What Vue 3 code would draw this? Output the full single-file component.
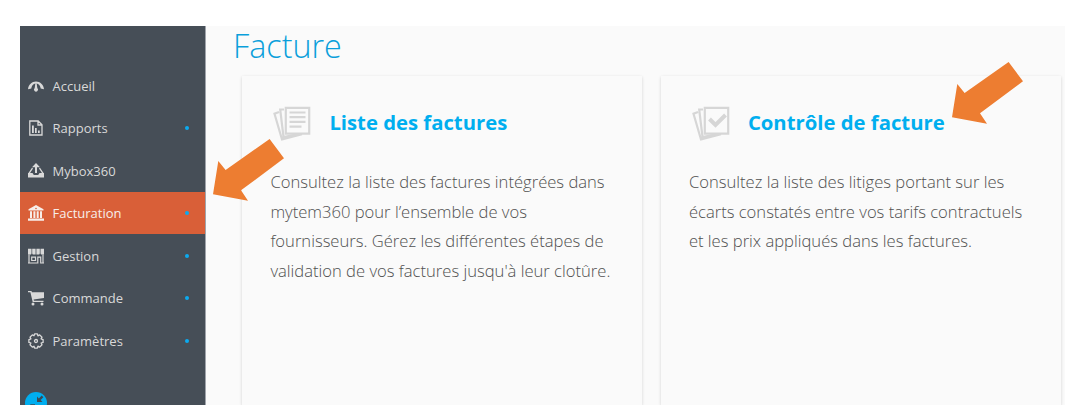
<template>
  <div class="app">
    <aside class="sidebar">
      <nav class="menu">
        <a
          v-for="item in menu"
          :key="item.id"
          class="menu-item"
          :class="{ active: item.id === current }"
          @click="current = item.id"
        >
          <svg class="menu-icon" viewBox="0 0 16 16">
            <g v-if="item.id === 'accueil'">
              <path d="M0 11.2C.5 6.5 3.8 3.400 8 3.400s7.500 3.100 8 7.800l-3.300-.6c-.3-2.500-1.200-4-2.700-4.700L8.700 5.500H7.300L6 5.900C4.500 6.600 3.600 8.100 3.300 10.600z" />
              <path d="M7.500 4.500h1l.8 5.600a2 2 0 1 1-2.600 0z" />
            </g>
            <g v-else-if="item.id === 'rapports'">
              <path class="line" d="M2.700 1h7.500L14 4.800V15H1.800V1zM10 1v4h4" />
              <path d="M4 5.500h1.800V13H4zM7 8h1.700v5H7zM10 10.500h1.700V13H10z" />
            </g>
            <g v-else-if="item.id === 'mybox'">
              <path d="M8 0l4 4.200H9V10H7V4.200H4z" />
              <path d="M0 10h4.500l1.300 2h4.400l1.300-2H16v4.500H0z" />
              <path class="line" d="M4.500 5.200L1 10.300M11.500 5.200L15 10.300" />
            </g>
            <g v-else-if="item.id === 'facturation'">
              <path d="M8 0l7.500 4.200v1.300H.5V4.200z" />
              <path d="M2 6.200h2V13H2zM5.400 6.200h2V13h-2zM8.700 6.200h2V13h-2zM12 6.200h2V13h-2zM0 13.600h16v2.200H0z" />
              <circle class="cut" cx="8" cy="3.5" r=".8" />
            </g>
            <g v-else-if="item.id === 'gestion'">
              <path d="M0 .8h3.500v4.700L3 6.500H0zM4.200.8h3.400v5.700H4.800l-.6-1zM8.400.8h3.400v4.700l-.6 1H8.400zM12.500.8H16v5.700h-3l-.5-1z" />
              <path class="thin" d="M1 6.500v9M15 6.500v9M3.700 9.200h3.800v3.300H3.700zM9.800 15.500V9.200h2.900v6.300M0 15h9.800M12.700 15H16" />
            </g>
            <g v-else-if="item.id === 'commande'">
              <path d="M0 1h3.500l.4 1.300H16V8L5.600 9.500l.4 1.300h9.500V12H4.700L2.400 2.300H0z" />
              <circle cx="5" cy="14" r="1.5" />
              <circle cx="14" cy="14" r="1.5" />
            </g>
            <g v-else>
              <path class="gear" d="M6.600.9h2.800l.5 1.900 1.800-.9 2.300 2.300-.9 1.700 2 .7v2.800l-2 .6.9 1.800-2.300 2.300-1.800-.9-.5 1.900H6.600L6 13.200l-1.700.9L2 11.800l.9-1.800-2-.6V6.600l2-.7L2 4.200l2.300-2.300 1.700.9z" />
              <circle class="gear" cx="8" cy="8" r="1.5" />
            </g>
          </svg>
          <span class="menu-label">{{ item.label }}</span>
          <span v-if="item.children" class="menu-dot"></span>
        </a>
      </nav>
      <button class="collapse">
        <svg viewBox="0 0 22 22">
          <path d="M12 4.500l1.900 1.900 2.800-2.800 1.700 1.700-2.800 2.800 1.900 1.900H12z" />
          <path d="M4.900 12.200H10v5.100l-1.700-1.700-2.800 2.800-1.700-1.700 2.800-2.800z" />
        </svg>
      </button>
    </aside>

    <main class="content">
      <h1 class="title">Facture</h1>
      <div class="cards">
        <section v-for="card in cards" :key="card.id" class="card">
          <header class="card-head">
            <svg class="card-icon" viewBox="0 0 38 36">
              <path d="M6 6L1.500 7.700 9 33.500l20-5.300M11 3.500H7.200L10.500 31l15-3" />
              <path d="M12.800 1.800h23.400v25.800H12.800z" />
              <path v-if="card.id === 'liste'" d="M16.500 6.500h16M16.500 11.200h16M16.500 15.900h16M16.500 20.600h12" />
              <path v-else class="check" d="M17.500 13l6 6L33.500 9" />
            </svg>
            <h2 class="card-title">{{ card.title }}</h2>
          </header>
          <p class="card-text">{{ card.text }}</p>
          <svg class="arrow" :class="card.id" viewBox="0 0 71 62">
            <path d="M0 55.300L5.300 22l7.300 9L56.600 0 71 19.300 28 51.300l7 10.400z" />
          </svg>
        </section>
      </div>
    </main>
  </div>
</template>

<script setup>
import { ref } from 'vue'

const current = ref('facturation')

const menu = [
  { id: 'accueil', label: 'Accueil' },
  { id: 'rapports', label: 'Rapports', children: true },
  { id: 'mybox', label: 'Mybox360' },
  { id: 'facturation', label: 'Facturation', children: true },
  { id: 'gestion', label: 'Gestion', children: true },
  { id: 'commande', label: 'Commande', children: true },
  { id: 'parametres', label: 'Paramètres', children: true },
]

const cards = [
  {
    id: 'liste',
    title: 'Liste des factures',
    text: "Consultez la liste des factures intégrées dans mytem360 pour l’ensemble de vos fournisseurs. Gérez les différentes étapes de validation de vos factures jusqu'à leur clotûre.",
  },
  {
    id: 'controle',
    title: 'Contrôle de facture',
    text: 'Consultez la liste des litiges portant sur les écarts constatés entre vos tarifs contractuels et les prix appliqués dans les factures.',
  },
]
</script>

<style>
body {
  background: #fff;
}
</style>

<style scoped>
.app {
  display: flex;
  box-sizing: border-box;
  width: 1045px;
  height: 379px;
  margin: 26px 0 0 20px;
  background: #fafafa;
  font-family: 'Open Sans', sans-serif;
}

.sidebar {
  flex: none;
  box-sizing: border-box;
  width: 186px;
  padding-top: 38.3px;
  overflow: hidden;
  background: #464e57;
  border-right: 1px solid #a0a4ab;
}

.menu-item {
  display: flex;
  align-items: center;
  height: 42.5px;
  padding: 0 16px 0 8px;
  color: #d9d9d9;
  font-size: 13px;
  cursor: pointer;
}

.menu-item.active {
  background: #d95f38;
  color: #f7eeea;
}

.menu-icon {
  width: 16px;
  height: 16px;
  margin-right: 8.5px;
  fill: currentColor;
}

.line,
.thin,
.gear {
  fill: none;
  stroke: currentColor;
  stroke-width: 1.3;
}

.thin {
  stroke-width: 1.2;
}

.gear {
  stroke-linejoin: round;
}

.cut {
  fill: #d95f38;
}

.menu-label {
  flex: 1;
}

.menu-dot {
  width: 4px;
  height: 4px;
  border-radius: 50%;
  background: #0baaf0;
}

.collapse {
  display: block;
  width: 22px;
  height: 22px;
  margin: 30px 0 0 5px;
  padding: 0;
  border: 0;
  border-radius: 50%;
  background: #00aeef;
}

.collapse svg {
  display: block;
  fill: #3c4a55;
}

.content {
  flex: 1;
  padding-left: 27px;
}

.title {
  margin: 0;
  height: 50px;
  color: #0a9fdb;
  font-size: 32.3px;
  font-weight: 300;
  line-height: 39px;
}

/* cuts the shadows at the bottom edge and leaves room for the pointers */
.cards {
  display: flex;
  gap: 18.5px;
  margin-left: 9.4px;
  clip-path: inset(-40px -40px 0 -40px);
}

.card {
  position: relative;
  flex: none;
  box-sizing: border-box;
  width: 400px;
  height: 329px;
  padding: 30px 28px 0 28px;
  box-shadow: 0 1px 3px rgba(0, 0, 0, 0.16);
}

.card-head {
  display: flex;
  align-items: flex-start;
  gap: 18px;
  height: 61px;
  padding-left: 3px;
}

.card-icon {
  width: 38px;
  height: 36px;
  fill: none;
  stroke: #d6d6d6;
  stroke-width: 2.2;
}

.card-icon .check {
  stroke-width: 4;
}

.card-title {
  margin: 0;
  color: #00aeef;
  font-size: 20.3px;
  font-weight: 700;
  line-height: 33px;
}

.card-text {
  margin: 0;
  color: #505050;
  font-size: 16.6px;
  font-weight: 300;
  line-height: 29.5px;
}

/* pointers laid over the cards */
.arrow {
  position: absolute;
  width: 71px;
  height: 62px;
  fill: #ed7d31;
}

.arrow.liste {
  left: -29px;
  top: 63px;
}

.arrow.controle {
  left: 291px;
  top: -14px;
}
</style>
